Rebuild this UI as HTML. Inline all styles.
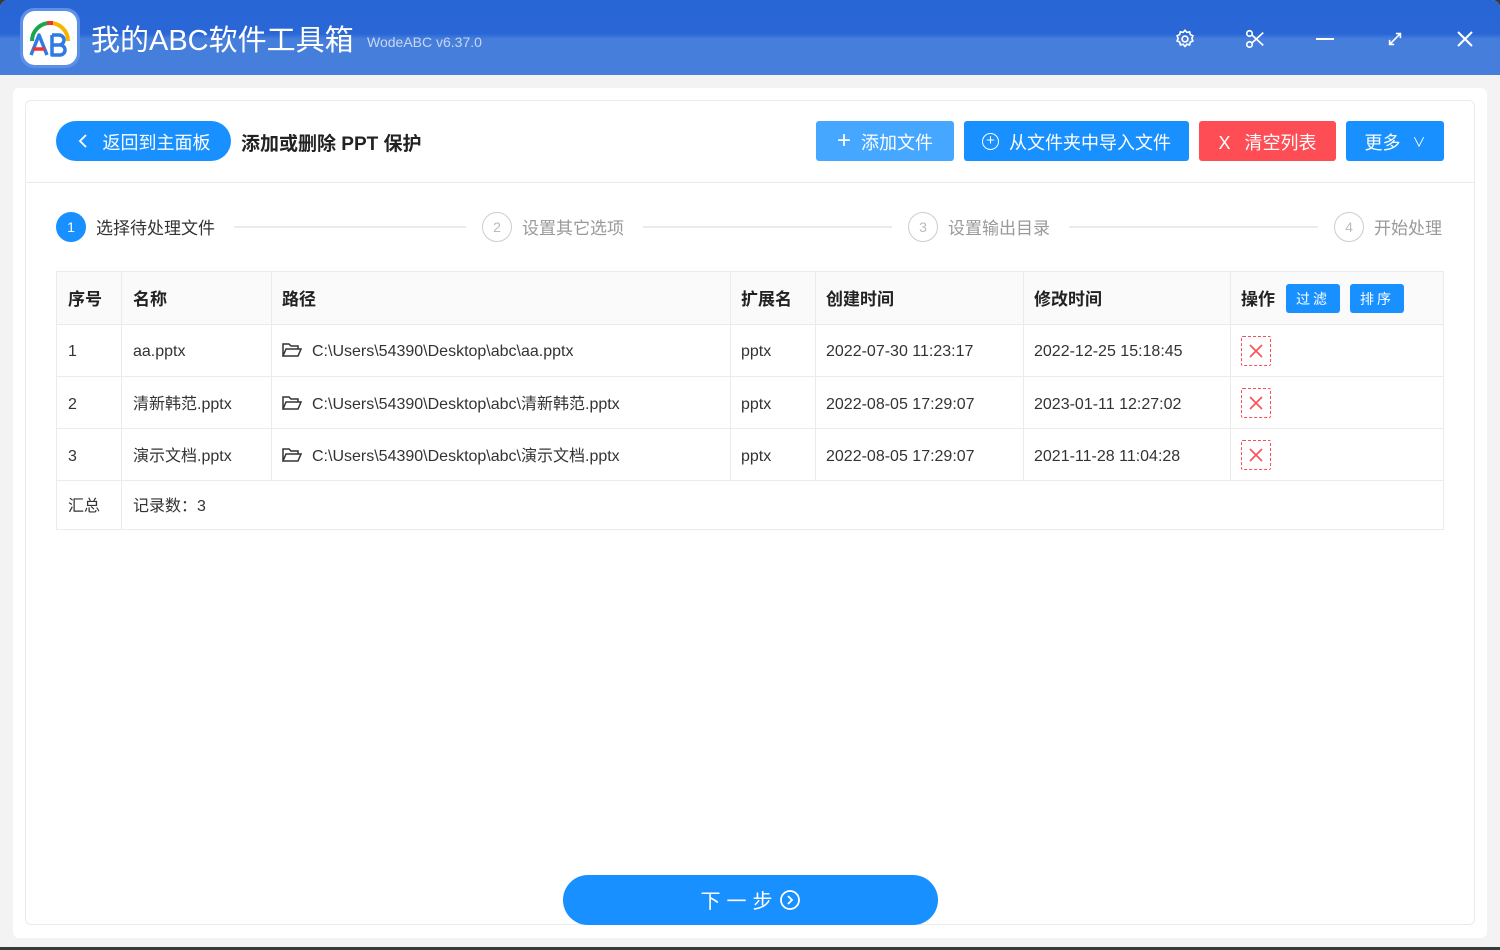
<!DOCTYPE html>
<html><head><meta charset="utf-8"><style>
*{margin:0;padding:0;box-sizing:border-box}
body{width:1500px;height:950px;overflow:hidden;background:#3a3a3a;font-family:"Liberation Sans","Noto Sans CJK SC",sans-serif;position:relative}
.a{position:absolute}
.win{left:0;top:0;width:1500px;height:947px;background:#f3f3f3;border-radius:8px 8px 0 0;overflow:hidden}
.tb{left:0;top:0;width:1500px;height:75px;background:linear-gradient(180deg,#2865d4 0,#2a67d6 45%,#467edb 52%,#467edb 100%)}
.btn{position:absolute;color:#fff;font-size:18px;display:flex;align-items:center;justify-content:center;border-radius:3px;line-height:22px;padding-top:3px}
.t{font-size:16px;color:#333;position:absolute;line-height:22px;height:22px;white-space:nowrap}
.h{font-size:17px;font-weight:bold;color:#222;position:absolute;line-height:22px;height:22px}
.vl{position:absolute;width:1px;background:#ebebeb}
.hl{position:absolute;height:1px;background:#ebebeb}
.x{position:absolute;width:30px;height:30px;border:1px dashed #ff4d55;border-radius:2px}
.step{position:absolute;width:30px;height:30px;border-radius:50%;border:1px solid #ccc;color:#bbb;font-size:14px;display:flex;align-items:center;justify-content:center}
.st{position:absolute;font-size:17px;color:#999;line-height:22px;height:22px;top:218px}
.ln{position:absolute;height:2px;background:#ebebeb;top:226px}
</style></head><body>
<div class="a win">
<div class="a tb"></div>
<div class="a" style="left:20px;top:8px;width:60px;height:60px;border-radius:14px;background:#5b8fe8"></div>
<div class="a" style="left:23px;top:11px;width:54px;height:54px;border-radius:12px;background:#fff">
<svg width="54" height="54" viewBox="0 0 54 54"><path d="M9 30 A18 18 0 0 1 27 12" stroke="#1aa64a" stroke-width="4" fill="none"/><path d="M27 12 A18 18 0 0 1 45 30" stroke="#f7b500" stroke-width="4" fill="none"/><path d="M24 12h6" stroke="#e33" stroke-width="4"/>
<path d="M8 44L16 24L24 44" stroke="#2f7ae5" stroke-width="3.5" fill="none" stroke-linejoin="round"/><path d="M10 38h12" stroke="#e33" stroke-width="3.5"/>
<path d="M29 24v20h8a5 5 0 0 0 0-10h-8M29 24h7a5 5 0 0 1 0 10" stroke="#2f7ae5" stroke-width="3.5" fill="none" stroke-linejoin="round"/></svg></div>
<div class="a" style="left:91px;top:23px;color:#fff;font-size:29px;line-height:36px">我的ABC软件工具箱</div>
<div class="a" style="left:367px;top:34px;color:#c8d6f2;font-size:14px">WodeABC v6.37.0</div>
<svg class="a" style="left:1174px;top:28px" width="22" height="22" viewBox="0 0 24 24" fill="none" stroke="#fff" stroke-width="1.8"><circle cx="12" cy="12" r="3.2"/><path d="M12 2.5l2 2.3 3-.6.8 3 2.8 1.3-1.1 2.8 1.1 2.8-2.8 1.3-.8 3-3-.6-2 2.3-2-2.3-3 .6-.8-3-2.8-1.3 1.1-2.8-1.1-2.8 2.8-1.3.8-3 3 .6z"/></svg>
<svg class="a" style="left:1244px;top:28px" width="22" height="22" viewBox="0 0 24 24" fill="none" stroke="#fff" stroke-width="1.8"><circle cx="6" cy="6" r="3"/><circle cx="6" cy="18" r="3"/><path d="M8.5 7.5L21 19M8.5 16.5L21 5"/></svg>
<div class="a" style="left:1316px;top:38px;width:18px;height:2px;background:#fff"></div>
<svg class="a" style="left:1386px;top:30px" width="18" height="18" viewBox="0 0 20 20" fill="none" stroke="#fff" stroke-width="1.8"><path d="M4 16L16 4M11 4h5v5M4 11v5h5"/></svg>
<svg class="a" style="left:1456px;top:30px" width="18" height="18" viewBox="0 0 18 18" stroke="#fff" stroke-width="2"><path d="M2 2L16 16M16 2L2 16"/></svg>
<div class="a" style="left:13px;top:88px;width:1474px;height:850px;background:#fff;border-radius:6px"></div>
<div class="a" style="left:25px;top:100px;width:1450px;height:825px;border:1px solid #ebebeb;border-radius:6px"></div>
<div class="hl" style="left:26px;top:182px;width:1448px"></div>
<div class="btn" style="left:56px;top:121px;width:175px;height:40px;border-radius:20px;background:#1890ff;font-size:18px"><svg width="12" height="16" viewBox="0 0 12 16" style="margin-right:14px;margin-top:-3px" fill="none" stroke="#fff" stroke-width="1.8"><path d="M9 2L3 8l6 6"/></svg>返回到主面板</div>
<div class="a" style="left:241px;top:133px;font-size:19px;font-weight:bold;color:#222;line-height:24px">添加或删除 PPT 保护</div>
<div class="btn" style="left:816px;top:121px;width:138px;height:40px;background:#45a7ff"><span style="font-size:24px;margin-right:10px;font-weight:300;margin-top:-3px">+</span>添加文件</div>
<div class="btn" style="left:964px;top:121px;width:225px;height:40px;background:#1890ff"><span style="width:17px;height:17px;border:1.5px solid #fff;border-radius:50%;display:inline-flex;align-items:center;justify-content:center;font-size:15px;margin-right:10px;margin-top:-3px">+</span>从文件夹中导入文件</div>
<div class="btn" style="left:1199px;top:121px;width:137px;height:40px;background:#ff4d55"><span style="margin-right:14px">X</span>清空列表</div>
<div class="btn" style="left:1346px;top:121px;width:98px;height:40px;background:#1890ff">更多<span style="font-size:13px;margin-left:12px">∨</span></div>
<div class="step" style="left:56px;top:212px;background:#1890ff;border-color:#1890ff;color:#fff">1</div>
<div class="st" style="left:96px;color:#333">选择待处理文件</div>
<div class="ln" style="left:234px;width:232px"></div>
<div class="step" style="left:482px;top:212px">2</div>
<div class="st" style="left:522px">设置其它选项</div>
<div class="ln" style="left:643px;width:249px"></div>
<div class="step" style="left:908px;top:212px">3</div>
<div class="st" style="left:948px">设置输出目录</div>
<div class="ln" style="left:1069px;width:249px"></div>
<div class="step" style="left:1334px;top:212px">4</div>
<div class="st" style="left:1374px">开始处理</div>
<div class="a" style="left:57px;top:272px;width:1387px;height:52px;background:#fafafa"></div>
<div class="a" style="left:56px;top:271px;width:1388px;height:259px;border:1px solid #ebebeb"></div>
<div class="hl" style="left:57px;top:324px;width:1386px"></div>
<div class="hl" style="left:57px;top:376px;width:1386px"></div>
<div class="hl" style="left:57px;top:428px;width:1386px"></div>
<div class="hl" style="left:57px;top:480px;width:1386px"></div>
<div class="vl" style="left:121px;top:272px;height:257px"></div>
<div class="vl" style="left:271px;top:272px;height:208px"></div>
<div class="vl" style="left:730px;top:272px;height:208px"></div>
<div class="vl" style="left:815px;top:272px;height:208px"></div>
<div class="vl" style="left:1023px;top:272px;height:208px"></div>
<div class="vl" style="left:1230px;top:272px;height:208px"></div>
<div class="h" style="left:68px;top:289px">序号</div><div class="h" style="left:133px;top:289px">名称</div><div class="h" style="left:282px;top:289px">路径</div><div class="h" style="left:741px;top:289px">扩展名</div><div class="h" style="left:826px;top:289px">创建时间</div><div class="h" style="left:1034px;top:289px">修改时间</div><div class="h" style="left:1241px;top:289px">操作</div>
<div class="btn" style="left:1286px;top:284px;width:54px;height:29px;font-size:14px;background:#1890ff;letter-spacing:3px;padding-top:1px">过滤</div>
<div class="btn" style="left:1350px;top:284px;width:54px;height:29px;font-size:14px;background:#1890ff;letter-spacing:3px;padding-top:1px">排序</div>
<div class="t" style="left:68px;top:341px">1</div><div class="t" style="left:133px;top:341px">aa.pptx</div><div class="t" style="left:312px;top:341px">C:\Users\54390\Desktop\abc\aa.pptx</div><div class="t" style="left:741px;top:341px">pptx</div><div class="t" style="left:826px;top:341px">2022-07-30 11:23:17</div><div class="t" style="left:1034px;top:341px">2022-12-25 15:18:45</div>
<div class="t" style="left:68px;top:394px">2</div><div class="t" style="left:133px;top:394px">清新韩范.pptx</div><div class="t" style="left:312px;top:394px">C:\Users\54390\Desktop\abc\清新韩范.pptx</div><div class="t" style="left:741px;top:394px">pptx</div><div class="t" style="left:826px;top:394px">2022-08-05 17:29:07</div><div class="t" style="left:1034px;top:394px">2023-01-11 12:27:02</div>
<div class="t" style="left:68px;top:446px">3</div><div class="t" style="left:133px;top:446px">演示文档.pptx</div><div class="t" style="left:312px;top:446px">C:\Users\54390\Desktop\abc\演示文档.pptx</div><div class="t" style="left:741px;top:446px">pptx</div><div class="t" style="left:826px;top:446px">2022-08-05 17:29:07</div><div class="t" style="left:1034px;top:446px">2021-11-28 11:04:28</div>
<svg class="a" style="left:282px;top:342px" width="20" height="16" viewBox="0 0 20 16" fill="none" stroke="#333" stroke-width="1.5"><path d="M1 14V2h6l2 2h7v3M1 14l3-7h15l-3 7z"/></svg>
<svg class="a" style="left:282px;top:395px" width="20" height="16" viewBox="0 0 20 16" fill="none" stroke="#333" stroke-width="1.5"><path d="M1 14V2h6l2 2h7v3M1 14l3-7h15l-3 7z"/></svg>
<svg class="a" style="left:282px;top:447px" width="20" height="16" viewBox="0 0 20 16" fill="none" stroke="#333" stroke-width="1.5"><path d="M1 14V2h6l2 2h7v3M1 14l3-7h15l-3 7z"/></svg>
<div class="x" style="left:1241px;top:336px"><svg width="28" height="28" viewBox="0 0 28 28" stroke="#ff4d55" stroke-width="1.6"><path d="M8 8L20 20M20 8L8 20"/></svg></div>
<div class="x" style="left:1241px;top:388px"><svg width="28" height="28" viewBox="0 0 28 28" stroke="#ff4d55" stroke-width="1.6"><path d="M8 8L20 20M20 8L8 20"/></svg></div>
<div class="x" style="left:1241px;top:440px"><svg width="28" height="28" viewBox="0 0 28 28" stroke="#ff4d55" stroke-width="1.6"><path d="M8 8L20 20M20 8L8 20"/></svg></div>
<div class="t" style="left:68px;top:496px">汇总</div><div class="t" style="left:133px;top:496px">记录数：3</div>
<div class="btn" style="left:563px;top:875px;width:375px;height:50px;border-radius:25px;background:#1890ff;font-size:20px;letter-spacing:6px">下一步<svg width="22" height="22" viewBox="0 0 22 22" style="margin-top:-3px" fill="none" stroke="#fff" stroke-width="1.8"><circle cx="11" cy="11" r="9"/><path d="M9 7l4 4-4 4"/></svg></div>
</div>
</body></html>
